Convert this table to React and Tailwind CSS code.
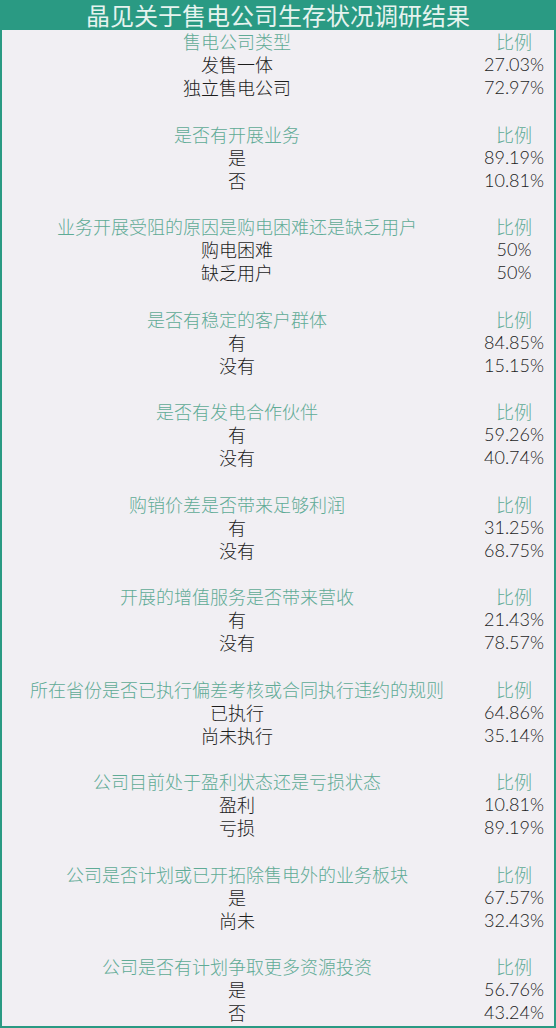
const sections = [
  { title: '售电公司类型', rows: [['发售一体', '27.03%'], ['独立售电公司', '72.97%']] },
  { title: '是否有开展业务', rows: [['是', '89.19%'], ['否', '10.81%']] },
  { title: '业务开展受阻的原因是购电困难还是缺乏用户', rows: [['购电困难', '50%'], ['缺乏用户', '50%']] },
  { title: '是否有稳定的客户群体', rows: [['有', '84.85%'], ['没有', '15.15%']] },
  { title: '是否有发电合作伙伴', rows: [['有', '59.26%'], ['没有', '40.74%']] },
  { title: '购销价差是否带来足够利润', rows: [['有', '31.25%'], ['没有', '68.75%']] },
  { title: '开展的增值服务是否带来营收', rows: [['有', '21.43%'], ['没有', '78.57%']] },
  { title: '所在省份是否已执行偏差考核或合同执行违约的规则', rows: [['已执行', '64.86%'], ['尚未执行', '35.14%']] },
  { title: '公司目前处于盈利状态还是亏损状态', rows: [['盈利', '10.81%'], ['亏损', '89.19%']] },
  { title: '公司是否计划或已开拓除售电外的业务板块', rows: [['是', '67.57%'], ['尚未', '32.43%']] },
  { title: '公司是否有计划争取更多资源投资', rows: [['是', '56.76%'], ['否', '43.24%']] },
];

function Row({ left, right, head }) {
  const color = head ? 'text-[#5fab96]' : 'text-[#1c1c1c]';
  return (
    <div className="flex h-[23.125px] leading-[23.125px] text-[18px]">
      <div className={`w-[470px] text-center whitespace-nowrap ${color}`}>{left}</div>
      <div
        className={`flex-1 text-center pl-[2px] ${color}`}
        style={head ? undefined : { fontFamily: 'Lato, "Noto Sans CJK SC", sans-serif' }}
      >
        {right}
      </div>
    </div>
  );
}

export default function App() {
  return (
    <div
      className="w-[556px] h-[1028px] bg-[#f1eff3] font-light"
      style={{ fontFamily: '"Noto Sans CJK SC", "Liberation Sans", sans-serif' }}
    >
      <div className="h-[30px] bg-[#2a9a83] text-[#e6f3ef] text-[24px] leading-[30px] text-center font-normal">
        晶见关于售电公司生存状况调研结果
      </div>
      <div className="border-x-2 border-b-2 border-[#2a9a83] h-[998px]">
        {sections.map((s, i) => (
          <div key={i} className={i < sections.length - 1 ? 'pb-[23.125px]' : ''}>
            <Row head left={s.title} right="比例" />
            {s.rows.map((r, j) => (
              <Row key={j} left={r[0]} right={r[1]} />
            ))}
          </div>
        ))}
      </div>
    </div>
  );
}
